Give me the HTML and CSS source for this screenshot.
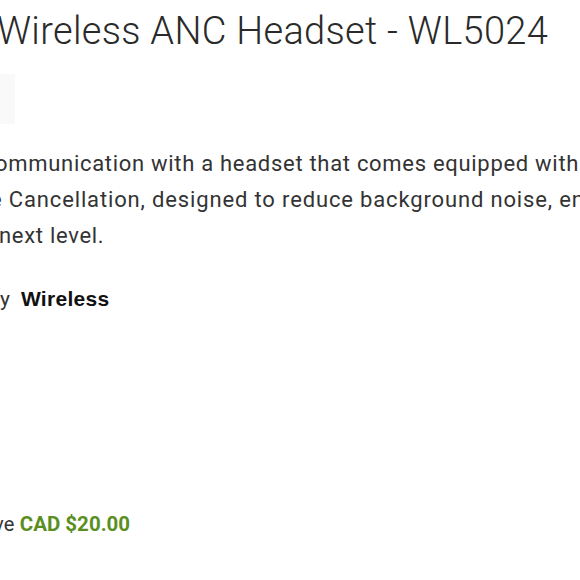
FILE: index.html
```html
<!DOCTYPE html>
<html lang="en">
<head>
<meta charset="utf-8">
<title>Wireless ANC Headset - WL5024</title>
<link rel="stylesheet" href="styles.css">
</head>
<body>
<main class="product">
  <h1 class="title">Wireless ANC Headset - WL5024</h1>
  <div class="badge"></div>
  <div class="desc">
    <div class="line line-1">ommunication with a headset that comes equipped with</div>
    <div class="line line-2">e Cancellation, designed to reduce background noise, enhancing</div>
    <div class="line line-3">next level.</div>
  </div>
  <div class="brand"><span class="brand-label">y</span><span class="brand-name">Wireless</span></div>
  <div class="save"><span class="save-label">ve</span> <span class="save-amount">CAD $20.00</span></div>
</main>
</body>
</html>
```
FILE: styles.css
```css
html, body {
  margin: 0;
  padding: 0;
  background: #ffffff;
  overflow: hidden;
}
body {
  width: 580px;
  height: 580px;
  font-family: Roboto, "Liberation Sans", sans-serif;
  color: #333333;
}
.product {
  display: flex;
  flex-direction: column;
  align-items: flex-start;
  overflow: hidden;
  width: 580px;
}
.title {
  margin: 6px 0 0 -3px;
  font-weight: 300;
  font-size: 38px;
  letter-spacing: 0.3px;
  line-height: 50px;
  color: #2a2a2a;
  white-space: nowrap;
}
.badge {
  margin-top: 18px;
  width: 15px;
  height: 50px;
  background: #f9f9f9;
}
.desc {
  margin-top: 22px;
  font-size: 22px;
  letter-spacing: 0.7px;
  line-height: 36px;
  white-space: nowrap;
}
.line-1 { margin-left: -5px; }
.line-2 { margin-left: -10px; letter-spacing: 0.85px; }
.line-3 { margin-left: -1px; }
.brand {
  margin-top: 30px;
  font-size: 21px;
  line-height: 30px;
  white-space: nowrap;
}
.brand-label { margin-right: 11px; }
.brand-name {
  font-family: "Liberation Sans", Arial, sans-serif;
  font-weight: 700;
  letter-spacing: 0.3px;
  color: #111111;
}
.save {
  margin-top: 195px;
  margin-left: -6px;
  font-size: 20px;
  line-height: 30px;
  white-space: nowrap;
}
.save-label { letter-spacing: 0.3px; }
.save-amount {
  font-weight: 700;
  font-size: 20.5px;
  color: #5a8f1f;
}
```
